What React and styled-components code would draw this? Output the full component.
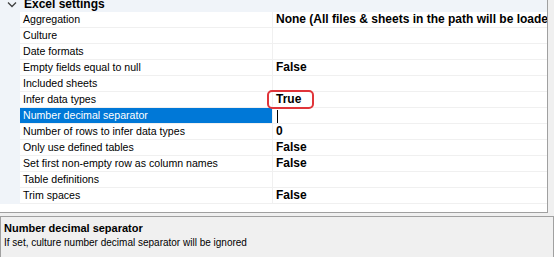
import React from 'react';
import styled, { createGlobalStyle } from 'styled-components';

const rows = [
  { name: 'Aggregation', value: 'None (All files & sheets in the path will be loaded)' },
  { name: 'Culture', value: '' },
  { name: 'Date formats', value: '' },
  { name: 'Empty fields equal to null', value: 'False' },
  { name: 'Included sheets', value: '' },
  { name: 'Infer data types', value: 'True', marked: true },
  { name: 'Number decimal separator', value: '', selected: true },
  { name: 'Number of rows to infer data types', value: '0' },
  { name: 'Only use defined tables', value: 'False' },
  { name: 'Set first non-empty row as column names', value: 'False' },
  { name: 'Table definitions', value: '' },
  { name: 'Trim spaces', value: 'False' },
];

const App = () => {
  return (
    <>
      <GlobalStyle />
      <Page>
        <Grid>
          <Category>
            <Chevron viewBox="0 0 10 6" width="10" height="6">
              <path d="M1 0.5 L5 4.5 L9 0.5" fill="none" stroke="#404040" strokeWidth="1.3" />
            </Chevron>
            <CategoryTitle>Excel settings</CategoryTitle>
          </Category>
          {rows.map((row) => (
            <Row key={row.name}>
              <Gutter />
              <Name selected={row.selected}>{row.name}</Name>
              <Value>
                {row.marked ? <Marked>{row.value}</Marked> : row.value}
                {row.selected && <Caret />}
              </Value>
            </Row>
          ))}
          <Filler />
        </Grid>
        <Help>
          <HelpTitle>Number decimal separator</HelpTitle>
          <HelpText>If set, culture number decimal separator will be ignored</HelpText>
        </Help>
      </Page>
    </>
  );
};

export default App;

const GlobalStyle = createGlobalStyle`
  body {
    margin: 0;
    background: #f0f0f0;
    font-family: "Liberation Sans", Arial, sans-serif;
    font-size: 11px;
    color: #000;
  }
`;

const Page = styled.div`
  width: 554px;
  height: 257px;
  overflow: hidden;
  background: #f0f0f0;
  display: flex;
  flex-direction: column;
`;

const Grid = styled.div`
  width: 547px;
  height: 212px;
  background: #fff;
  border-right: 1px solid #a0a0a0;
  border-bottom: 1px solid #a0a0a0;
  display: flex;
  flex-direction: column;
  overflow: hidden;
`;

const Category = styled.div`
  height: 12px;
  background: #f0f4f9;
  display: flex;
  align-items: flex-end;
  overflow: hidden;
`;

const Chevron = styled.svg`
  margin: 0 0 4px 7px;
  flex: none;
`;

const CategoryTitle = styled.span`
  margin-left: 7px;
  font-weight: bold;
  font-size: 12px;
  line-height: 14px;
  margin-bottom: 1px;
`;

const Row = styled.div`
  display: grid;
  grid-template-columns: 20px 253px 1fr;
  height: 16px;
`;

const Gutter = styled.div`
  background: #f0f4f9;
`;

const Name = styled.div`
  padding-left: 3px;
  font-size: 10.6px;
  line-height: 15px;
  white-space: nowrap;
  overflow: hidden;
  border-bottom: 1px solid #f0f0f0;
  border-right: 1px solid #f0f0f0;
  background: ${({ selected }) => (selected ? '#0078d7' : '#fff')};
  color: ${({ selected }) => (selected ? '#fff' : '#000')};
`;

const Value = styled.div`
  position: relative;
  padding-left: 3px;
  font-size: 12px;
  line-height: 15px;
  font-weight: bold;
  white-space: nowrap;
  border-bottom: 1px solid #f0f0f0;
`;

const Marked = styled.span`
  position: relative;
  display: inline-block;

  &::after {
    content: '';
    position: absolute;
    left: -9px;
    right: -13px;
    top: -2px;
    bottom: -2px;
    border: 2px solid #e0353a;
    border-radius: 5px;
  }
`;

const Caret = styled.span`
  position: absolute;
  left: 4px;
  top: 2px;
  width: 1px;
  height: 13px;
  background: #000;
`;

const Filler = styled.div`
  flex: 1;
`;

const Help = styled.div`
  margin-top: 3px;
  width: 546px;
  flex: 1;
  border: 1px solid #a0a0a0;
  border-bottom: none;
  background: #f0f0f0;
  padding: 5px 3px 0;
`;

const HelpTitle = styled.div`
  font-weight: bold;
  font-size: 11px;
  line-height: 13px;
`;

const HelpText = styled.div`
  font-size: 10px;
  line-height: 14px;
  margin-top: 1px;
`;
